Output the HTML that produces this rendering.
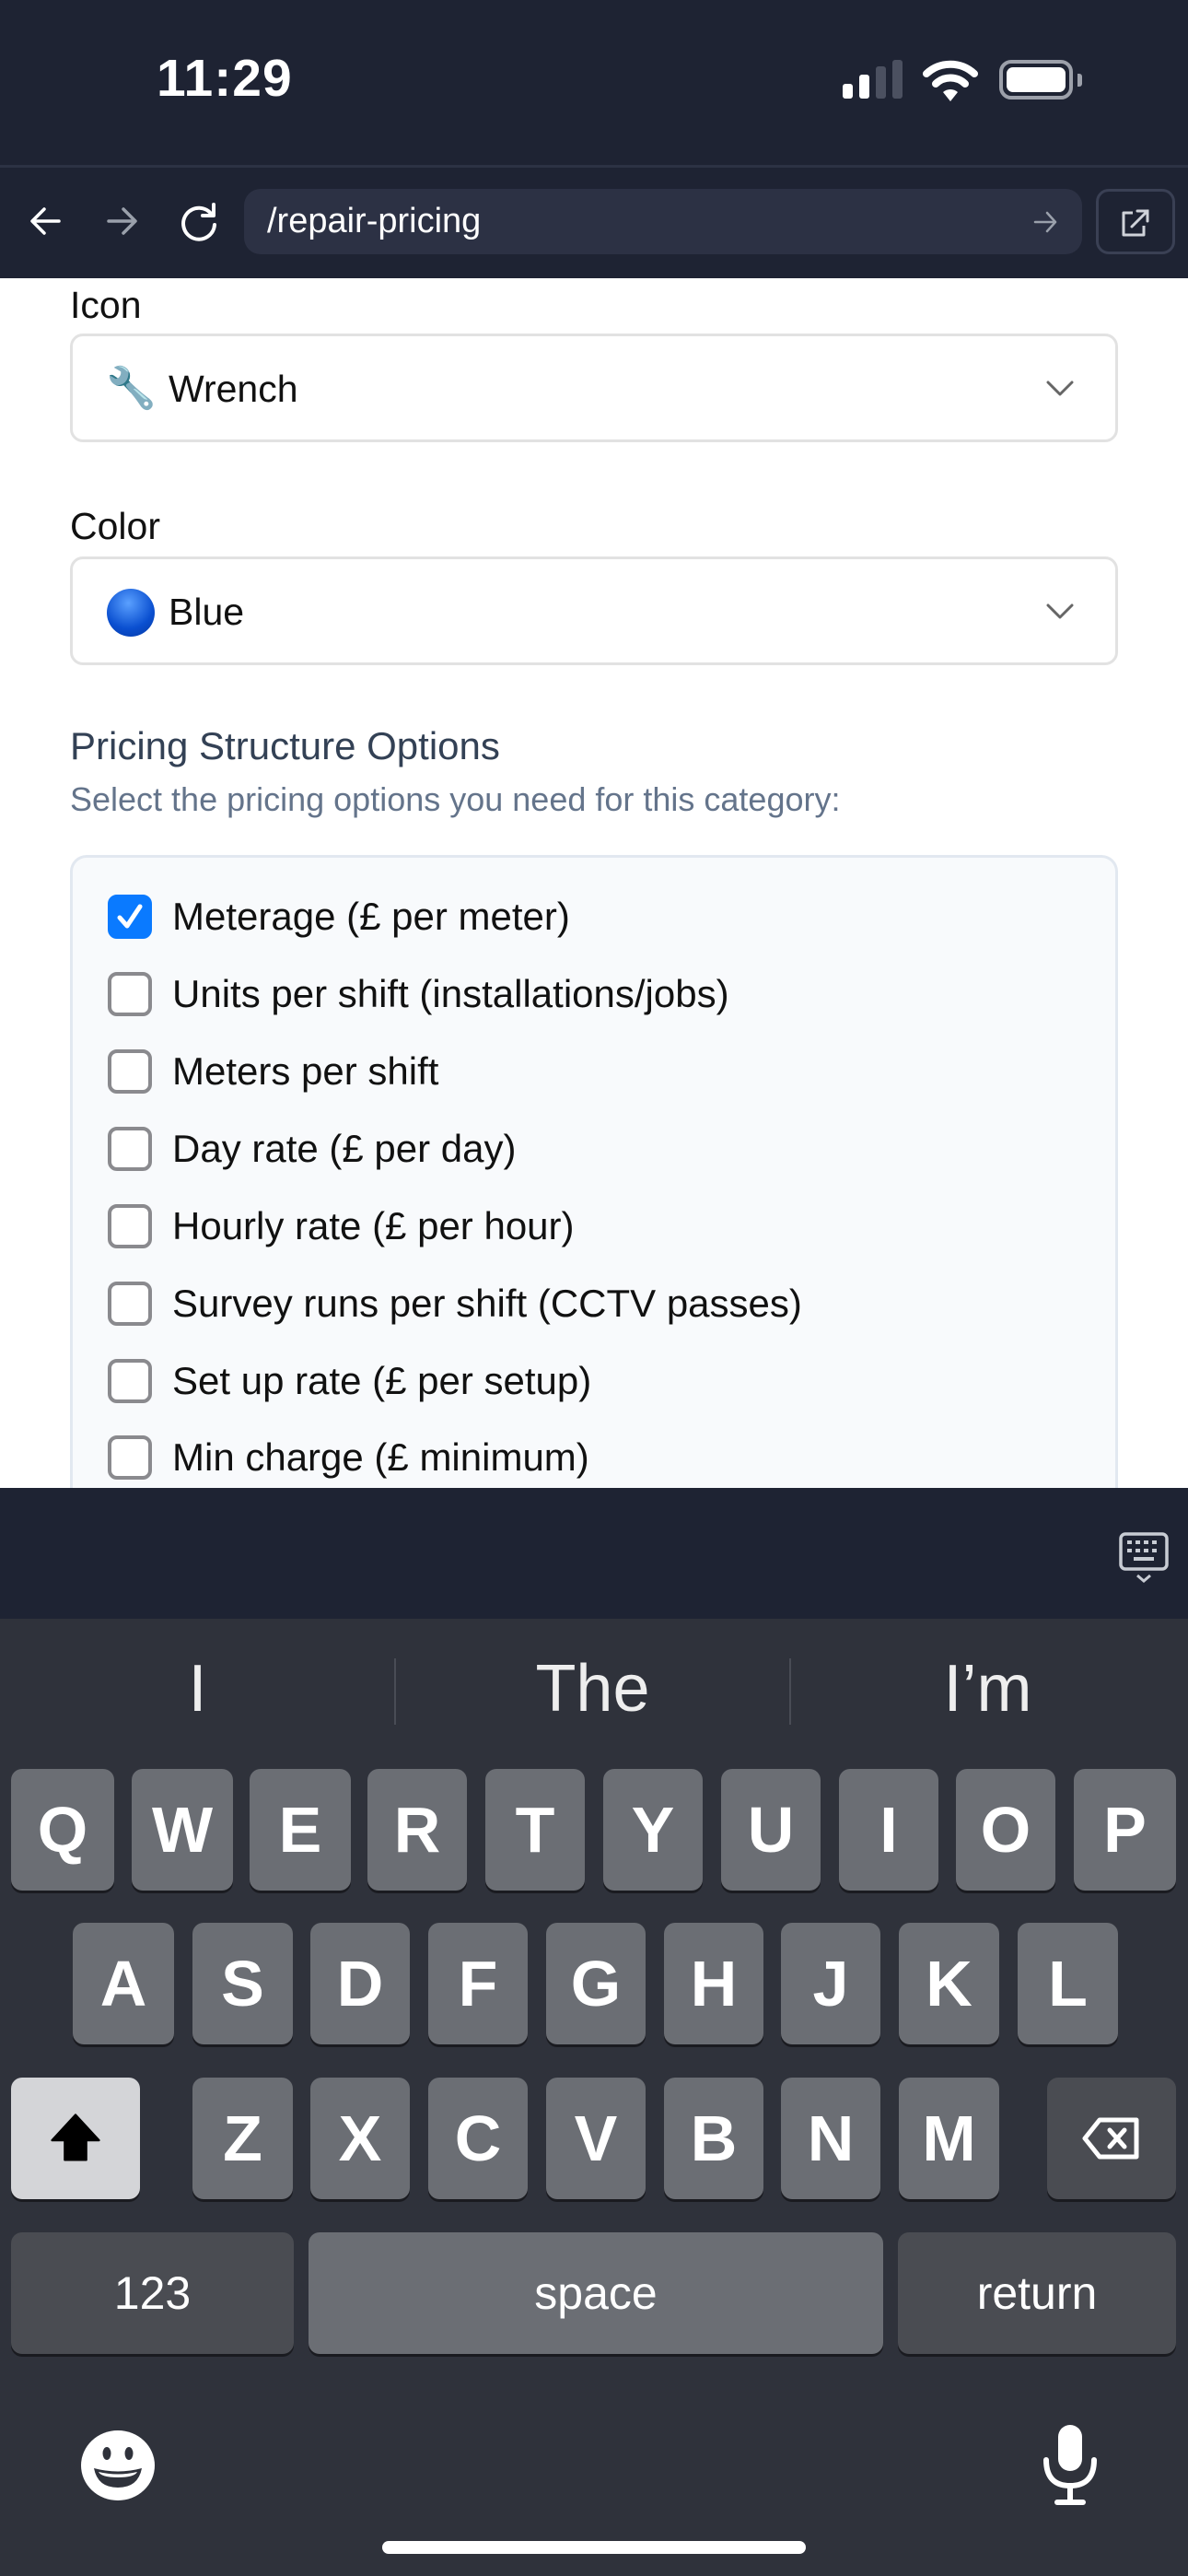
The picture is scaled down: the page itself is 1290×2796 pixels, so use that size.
<!DOCTYPE html>
<html><head><meta charset="utf-8"><style>
*{margin:0;padding:0;box-sizing:border-box}
body{width:1290px;height:2796px;position:relative;overflow:hidden;background:#1e2333;font-family:"Liberation Sans",sans-serif}
.abs{position:absolute}
.time{left:170px;top:52px;font-size:57px;font-weight:bold;color:#fff;letter-spacing:1px}
.content{left:0;top:302px;width:1290px;height:1313px;background:#fff;overflow:hidden}
.lbl{position:absolute;left:76px;font-size:41px;color:#111}
.sel{position:absolute;left:76px;width:1138px;height:118px;border:3px solid #e2e2e2;border-radius:14px;background:#fff}
.sel span{position:absolute;left:104px;top:34px;font-size:41px;color:#111}
.chev{position:absolute;right:44px;top:44px}
.box{position:absolute;left:76px;top:626px;width:1138px;height:800px;border:3px solid #e2e8f0;border-radius:18px;background:#f8fafc}
.item{position:absolute;left:38px;height:48px;font-size:42px;color:#111;line-height:48px}
.cb{position:absolute;left:0;top:0;width:48px;height:48px;border:4px solid #8a8a8e;border-radius:10px;background:#fff}
.cb.on{background:#0a7aff;border-color:#0a7aff}
.item span{position:absolute;left:70px;top:0;white-space:nowrap}
.kb{left:0;top:1757px;width:1290px;height:1039px;background:#2f323b}
.key{position:absolute;height:132px;background:#6b6e74;border-radius:12px;color:#fff;font-size:70px;font-weight:bold;text-align:center;line-height:132px;box-shadow:0 3px 0 #1a1b20}
.sm{font-weight:normal;font-size:50px}
.sug{position:absolute;top:1792px;font-size:72px;color:#eee;text-align:center;width:429px}
</style></head><body>
<div class="abs time">11:29</div>
<div class="abs" style="left:915px;top:91px;width:11px;height:16px;background:#fff;border-radius:3px"></div>
<div class="abs" style="left:933px;top:81px;width:11px;height:26px;background:#fff;border-radius:3px"></div>
<div class="abs" style="left:951px;top:72px;width:11px;height:35px;background:#4b5060;border-radius:3px"></div>
<div class="abs" style="left:969px;top:65px;width:11px;height:42px;background:#4b5060;border-radius:3px"></div>
<svg class="abs" style="left:1002px;top:64px" width="60" height="46" viewBox="0 0 60 46"><path d="M4 16 A38 38 0 0 1 56 16" stroke="#fff" stroke-width="8" fill="none" stroke-linecap="round"/><path d="M14 27 A23 23 0 0 1 46 27" stroke="#fff" stroke-width="8" fill="none" stroke-linecap="round"/><path d="M22 36 L30 46 L38 36 A12 12 0 0 0 22 36Z" fill="#fff"/></svg>
<div class="abs" style="left:1085px;top:65px;width:80px;height:43px;border:4px solid #9ca0aa;border-radius:13px;padding:4px"><div style="width:100%;height:100%;background:#fff;border-radius:7px"></div></div>
<div class="abs" style="left:1170px;top:80px;width:5px;height:14px;background:#9ca0aa;border-radius:0 3px 3px 0"></div>
<div class="abs" style="left:0;top:179px;width:1290px;height:3px;background:#2c3244"></div>
<svg class="abs" style="left:28px;top:218px" width="44" height="44" viewBox="0 0 44 44"><path d="M36 22H8M20 9L7 22L20 35" stroke="#fff" stroke-width="3.5" fill="none" stroke-linecap="round" stroke-linejoin="round"/></svg>
<svg class="abs" style="left:110px;top:218px" width="44" height="44" viewBox="0 0 44 44"><path d="M8 22H36M24 9L37 22L24 35" stroke="#9aa0ab" stroke-width="3.5" fill="none" stroke-linecap="round" stroke-linejoin="round"/></svg>
<svg class="abs" style="left:192px;top:216px" width="50" height="50" viewBox="0 0 50 50"><path d="M38 17A17 17 0 1 0 41 28" stroke="#fff" stroke-width="4" fill="none" stroke-linecap="round"/><path d="M40 6V18H28" stroke="#fff" stroke-width="4" fill="none" stroke-linecap="round" stroke-linejoin="round"/></svg>
<div class="abs" style="left:265px;top:205px;width:910px;height:71px;background:#2c3144;border-radius:18px"></div>
<div class="abs" style="left:290px;top:215px;font-size:38px;color:#fff;line-height:50px">/repair-pricing</div>
<svg class="abs" style="left:1120px;top:226px" width="30" height="30" viewBox="0 0 30 30"><path d="M4 15H26M17 5L26 15L17 25" stroke="#9aa0ab" stroke-width="2.5" fill="none" stroke-linecap="round" stroke-linejoin="round"/></svg>
<div class="abs" style="left:1190px;top:205px;width:86px;height:71px;border:3px solid #3a4054;border-radius:14px"></div>
<svg class="abs" style="left:1215px;top:224px" width="36" height="36" viewBox="0 0 36 36"><path d="M15 7H5V31H27V21" stroke="#d0d3da" stroke-width="3" fill="none" stroke-linejoin="round"/><path d="M14 22L31 5M20 5H31V16" stroke="#d0d3da" stroke-width="3" fill="none" stroke-linecap="round"/></svg>
<div class="abs content">
 <div class="lbl" style="top:6px">Icon</div>
 <div class="sel" style="top:60px"><span style="left:36px;top:30px;font-size:44px;font-family:'Liberation Sans','Noto Sans CJK JP',sans-serif">🔧</span><span>Wrench</span>
  <svg class="chev" width="32" height="24" viewBox="0 0 32 24"><path d="M3 6L16 19L29 6" stroke="#666" stroke-width="3" fill="none" stroke-linecap="round" stroke-linejoin="round"/></svg></div>
 <div class="lbl" style="top:246px">Color</div>
 <div class="sel" style="top:302px"><div style="position:absolute;left:37px;top:32px;width:52px;height:52px;border-radius:50%;background:radial-gradient(circle at 45% 30%,#5aa0ff,#0a4fd0 60%,#0638a0)"></div><span>Blue</span>
  <svg class="chev" width="32" height="24" viewBox="0 0 32 24"><path d="M3 6L16 19L29 6" stroke="#666" stroke-width="3" fill="none" stroke-linecap="round" stroke-linejoin="round"/></svg></div>
 <div class="lbl" style="top:484px;color:#334155;font-size:42px">Pricing Structure Options</div>
 <div class="lbl" style="top:545px;font-size:36px;color:#64748b">Select the pricing options you need for this category:</div>
 <div class="box">
  <div class="item" style="top:40px"><div class="cb on"><svg width="40" height="40" viewBox="0 0 40 40" style="position:absolute;left:0;top:0"><path d="M9 21L17 30L31 9" stroke="#fff" stroke-width="5" fill="none" stroke-linecap="round" stroke-linejoin="round"/></svg></div><span>Meterage (£ per meter)</span></div>
  <div class="item" style="top:124px"><div class="cb"></div><span>Units per shift (installations/jobs)</span></div>
  <div class="item" style="top:208px"><div class="cb"></div><span>Meters per shift</span></div>
  <div class="item" style="top:292px"><div class="cb"></div><span>Day rate (£ per day)</span></div>
  <div class="item" style="top:376px"><div class="cb"></div><span>Hourly rate (£ per hour)</span></div>
  <div class="item" style="top:460px"><div class="cb"></div><span>Survey runs per shift (CCTV passes)</span></div>
  <div class="item" style="top:544px"><div class="cb"></div><span>Set up rate (£ per setup)</span></div>
  <div class="item" style="top:627px"><div class="cb"></div><span>Min charge (£ minimum)</span></div>
 </div>
</div>
<svg class="abs" style="left:1214px;top:1662px" width="56" height="60" viewBox="0 0 56 60"><rect x="3" y="3" width="50" height="38" rx="5" stroke="#c8ccd4" stroke-width="3.5" fill="none"/><g fill="#c8ccd4"><rect x="10" y="10" width="5" height="4"/><rect x="19" y="10" width="5" height="4"/><rect x="28" y="10" width="5" height="4"/><rect x="37" y="10" width="5" height="4"/><rect x="10" y="19" width="5" height="4"/><rect x="19" y="19" width="5" height="4"/><rect x="28" y="19" width="5" height="4"/><rect x="37" y="19" width="5" height="4"/><rect x="17" y="28" width="22" height="4"/></g><path d="M21 48L28 54L35 48" stroke="#c8ccd4" stroke-width="3" fill="none"/></svg>
<div class="abs kb"></div>
<div class="sug" style="left:0">I</div>
<div class="sug" style="left:429px">The</div>
<div class="sug" style="left:858px">I’m</div>
<div class="abs" style="left:428px;top:1800px;width:2px;height:72px;background:#494c55"></div>
<div class="abs" style="left:857px;top:1800px;width:2px;height:72px;background:#494c55"></div>
<div class="key" style="left:12px;top:1920px;width:112px">Q</div>
<div class="key" style="left:143px;top:1920px;width:110px">W</div>
<div class="key" style="left:271px;top:1920px;width:110px">E</div>
<div class="key" style="left:399px;top:1920px;width:108px">R</div>
<div class="key" style="left:527px;top:1920px;width:108px">T</div>
<div class="key" style="left:655px;top:1920px;width:108px">Y</div>
<div class="key" style="left:783px;top:1920px;width:108px">U</div>
<div class="key" style="left:911px;top:1920px;width:108px">I</div>
<div class="key" style="left:1038px;top:1920px;width:108px">O</div>
<div class="key" style="left:1166px;top:1920px;width:111px">P</div>
<div class="key" style="left:79px;top:2087px;width:110px">A</div>
<div class="key" style="left:209px;top:2087px;width:109px">S</div>
<div class="key" style="left:337px;top:2087px;width:108px">D</div>
<div class="key" style="left:465px;top:2087px;width:108px">F</div>
<div class="key" style="left:593px;top:2087px;width:108px">G</div>
<div class="key" style="left:721px;top:2087px;width:108px">H</div>
<div class="key" style="left:848px;top:2087px;width:108px">J</div>
<div class="key" style="left:976px;top:2087px;width:109px">K</div>
<div class="key" style="left:1105px;top:2087px;width:109px">L</div>
<div class="key" style="left:12px;top:2255px;width:140px;background:#d4d5d8"><svg width="64" height="64" viewBox="0 0 60 60" style="margin-top:34px"><path d="M30 6L6 32H19V52H41V32H54Z" fill="#000" stroke="#000" stroke-width="2" stroke-linejoin="round"/></svg></div>
<div class="key" style="left:209px;top:2255px;width:109px">Z</div>
<div class="key" style="left:337px;top:2255px;width:108px">X</div>
<div class="key" style="left:465px;top:2255px;width:108px">C</div>
<div class="key" style="left:593px;top:2255px;width:108px">V</div>
<div class="key" style="left:721px;top:2255px;width:108px">B</div>
<div class="key" style="left:848px;top:2255px;width:108px">N</div>
<div class="key" style="left:976px;top:2255px;width:109px">M</div>
<div class="key" style="left:1137px;top:2255px;width:140px;background:#4a4c52"><svg width="70" height="60" viewBox="0 0 70 60" style="margin-top:36px"><path d="M22 10H62V50H22L6 30Z" stroke="#fff" stroke-width="5" fill="none" stroke-linejoin="round"/><path d="M33 21L49 39M49 21L33 39" stroke="#fff" stroke-width="5" stroke-linecap="round"/></svg></div>
<div class="key sm" style="left:12px;top:2423px;width:307px;background:#4a4c52">123</div>
<div class="key sm" style="left:335px;top:2423px;width:624px">space</div>
<div class="key sm" style="left:975px;top:2423px;width:302px;background:#4a4c52">return</div>
<svg class="abs" style="left:86px;top:2636px" width="84" height="80" viewBox="0 0 84 80"><ellipse cx="42" cy="40" rx="40" ry="38" fill="#fff"/><ellipse cx="30" cy="27" rx="4.5" ry="7" fill="#2f323b"/><ellipse cx="54" cy="27" rx="4.5" ry="7" fill="#2f323b"/><path d="M16 43Q42 50 68 43Q64 64 42 64Q20 64 16 43Z" fill="#2f323b"/><path d="M21 47Q42 52 63 47Q60 53 42 53Q24 53 21 47Z" fill="#fff"/></svg>
<svg class="abs" style="left:1130px;top:2630px" width="64" height="90" viewBox="0 0 64 90"><rect x="19" y="2" width="26" height="50" rx="13" fill="#fff"/><path d="M6 40Q6 68 32 68Q58 68 58 40" stroke="#fff" stroke-width="6" fill="none" stroke-linecap="round"/><path d="M32 68V84M18 86H46" stroke="#fff" stroke-width="6" stroke-linecap="round"/></svg>
<div class="abs" style="left:415px;top:2758px;width:460px;height:14px;background:#fff;border-radius:7px"></div>
</body></html>
